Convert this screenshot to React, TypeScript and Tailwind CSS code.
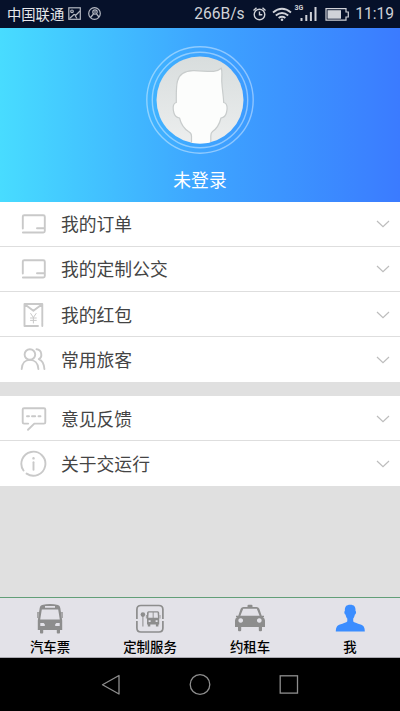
import type { ReactNode } from 'react';

interface Item {
  label: string;
  icon: ReactNode;
  low?: boolean;
}

function LineIcon({ children }: { children: ReactNode }) {
  return (
    <svg width="28" height="28" viewBox="0 0 28 28" fill="none" stroke="#c9c9c9" strokeWidth="1.9" strokeLinecap="round" strokeLinejoin="round">
      {children}
    </svg>
  );
}

const cardIcon = (
  <LineIcon>
    <path d="M2.8 18.6V6.6Q2.800 5.200 4.200 5.200H23.300q1.500 0 1.500 1.500V21q0 1.500-1.500 1.500H2.900M17 18.200h7.500" />
  </LineIcon>
);

const ACCOUNT: Item[] = [
  { label: '我的订单', icon: cardIcon },
  { label: '我的定制公交', icon: cardIcon },
  {
    label: '我的红包',
    low: true,
    icon: (
      <LineIcon>
        <path d="M22.300 21V3H4.500v22H18M22.300 21.500V25M5 3.500l8.400 6.300L21.800 3.500" />
        <path d="m10.700 12.500 2.700 4 2.700-4M13.400 16.500v5.500M10.500 17h5.800M10.500 19.400h5.800" strokeWidth="1" />
      </LineIcon>
    ),
  },
  {
    label: '常用旅客',
    icon: (
      <LineIcon>
        <circle cx="9.900" cy="8.500" r="5.300" />
        <path d="M1.700 23c.3-6 3.800-9.100 8.200-9.100s8.200 3.100 8.500 9.100M16.500 3.300c5.600.4 6.200 7.900 2.300 9.800 3.200 1.200 5.200 4.500 5.600 9.900" />
      </LineIcon>
    ),
  },
];

const ABOUT: Item[] = [
  {
    label: '意见反馈',
    low: true,
    icon: (
      <LineIcon>
        <path d="M8.200 18.600H4q-1.300 0-1.300-1.300V4.500q0-1.300 1.300-1.300h20q1.300 0 1.300 1.300v12.800q0 1.300-1.300 1.300h-9.700L8 24.800" />
        <path d="M7 11.300h2M12 11.300h3.200M18.500 11.300h2" />
      </LineIcon>
    ),
  },
  {
    label: '关于交运行',
    icon: (
      <LineIcon>
        <path d="M3.500 20.500A12 12 0 1 1 6.600 23.600" />
        <path d="M13.500 12.300v7.500" />
        <path d="M13.500 8.200v.2" strokeWidth="2.400" />
      </LineIcon>
    ),
  },
];

const TABS: Item[] = [
  {
    label: '汽车票',
    icon: (
      <svg width="32" height="32" viewBox="0 0 32 32" fill="#8d8d8d">
        <path fillRule="evenodd" d="M8 2Q16 .2 24 2q2 .6 2.300 3l1.900 12.500v9.500h-2.200v2.700q0 .8-.8.8h-1.600q-.8 0-.8-.8V27H9.200v2.700q0 .8-.8.8H6.800q-.8 0-.8-.8V27H3.800v-9.500L5.700 5q.3-2.400 2.300-3ZM11 3v1.700h10V3ZM7.800 6.500 6.200 16.500h19.600L24.200 6.500ZM6.300 20v3h4.500v-1.700L9.600 20Zm19.400 0h-3.300l-1.200 1.300V23h4.500Z" />
        <path d="M3.300 9h1.500l-.6 6h-.9ZM27.200 9h1.500v6h-.9Z" />
      </svg>
    ),
  },
  {
    label: '定制服务',
    icon: (
      <svg width="32" height="32" viewBox="0 0 32 32" fill="#8d8d8d">
        <path d="M2.900 16V6.500q0-4 4-4h18q4 0 4 4V16M2.900 18v7q0 4 4 4h18q4 0 4-4v-7" fill="none" stroke="#8d8d8d" strokeWidth="1.700" />
        <circle cx="8.900" cy="11.600" r="2.300" />
        <path d="M8.400 13h1v10.500h-1Z" />
        <path fillRule="evenodd" d="M14.500 8.300h9.300q1.200 0 1.400 1.500v11.700h-.8V23.500h-2.500v-2h-5.600v2h-2.500v-2H13V9.800q.3-1.500 1.500-1.500Zm.2 1.300-.4 5.200h4.400V9.600Zm4.900 0v5.200H24l-.4-5.200Zm-5 7.700v1.800h2v-1.800Zm7 0v1.800h2v-1.800Z" />
        <path d="M11.900 12h.8v3.500h-.8ZM25.600 12h.8v3.500h-.8Z" />
      </svg>
    ),
  },
  {
    label: '约租车',
    icon: (
      <svg width="32" height="32" viewBox="0 0 32 32" fill="#8d8d8d">
        <path fillRule="evenodd" d="M13.500 4V2.700q0-1 1-1h3q1 0 1 1V4h4q2 0 2.800 1.800l2.400 7h2.300v1.400h-1.200q2.200.8 2.200 3.200V24h-3v3.200q0 1-1 1h-1.200q-1 0-1-1V24H7.200v3.200q0 1-1 1H5q-1 0-1-1V24H1v-6.600q0-2.400 2.200-3.200H2v-1.400h2.300l2.400-7Q7.500 4 9.500 4ZM9.200 5.800 6.400 12.800h19.200l-2.800-7ZM6.700 15.200a2.300 2.300 0 1 0 .01 0ZM25.300 15.200a2.300 2.300 0 1 0 .01 0Z" />
      </svg>
    ),
  },
  {
    label: '我',
    icon: (
      <svg width="32" height="32" viewBox="0 0 32 32" fill="#3b8dff">
        <path d="M16.200 1.800c4 0 5.600 2 5.300 6.200 1 .3.700 3-.7 3.800-.3 2-1 3-1.600 3.800v2.600c.8 2 8.800 2.700 10.300 5 1 1.500 1.200 3 1.300 5.300H1.800c.1-2.300.3-3.800 1.300-5.300 1.500-2.300 9.400-3 10.200-5v-2.600c-.7-.8-1.400-1.800-1.700-3.800-1.400-.8-1.700-3.500-.7-3.800-.3-4.200 1.300-6.200 5.300-6.200Z" />
      </svg>
    ),
  },
];

function StatusBar() {
  return (
    <div className="flex h-7 justify-between bg-[#06112a] text-[#d0d2d8]">
      <div className="flex pl-[7px]">
        <span className="text-[14.3px] leading-[27px] text-[#e7e8ec]">中国联通</span>
        <svg className="ml-[4px] mt-[7px]" width="34" height="14" viewBox="0 0 34 14" fill="none" stroke="#b4b8c1" strokeWidth="1.2">
          <rect x=".8" y=".8" width="11.500" height="11.500" />
          <circle cx="4" cy="4.300" r="1.300" />
          <path d="M1.500 11.500 6 7.500l2 .5 4-4M7 8.500l2 3" />
          <circle cx="26.500" cy="6.500" r="5.800" />
          <circle cx="27" cy="5" r="2.200" />
          <path d="m22.500 10.500 3-3.500M28.500 7l2.500 3M27 4v2" />
        </svg>
      </div>
      <div className="flex font-[Roboto]">
        <span className="w-[51px] whitespace-nowrap text-[15.6px] leading-[29px]">266B/s</span>
        <svg className="ml-[6px]" width="98" height="28" viewBox="0 0 98 28" fill="none" stroke="#d0d2d8" strokeWidth="1.4">
          <circle cx="8.500" cy="14.500" r="5.300" />
          <path d="M8.500 11.500v3.300h2.800M2.500 10.500l3-2.700M14.500 10.500l-3-2.700" />
          <path d="M22 12.400q9-7.200 18 0M24.800 15.500q6.200-5 12.400 0M27.600 18q3.400-2.500 6.800 0" strokeWidth="1.900" />
          <circle cx="31" cy="19.700" r="1.300" fill="#d0d2d8" stroke="none" />
          <path d="M50.500 21v-3M55.300 21v-6M59.900 21v-9M64.500 21V7" strokeWidth="2" />
          <text x="43.500" y="10" fill="#d0d2d8" stroke="none" fontSize="7" fontWeight="700">3G</text>
          <path d="M75 8.700h20V12h2.300v5H95v3.200H75Z" strokeWidth="1.200" />
          <path d="M76.500 10.200h13.500v8.500H76.500Z" fill="#d0d2d8" stroke="none" />
        </svg>
        <span className="ml-[6px] mr-[6px] whitespace-nowrap text-[15.6px] leading-[29px]">11:19</span>
      </div>
    </div>
  );
}

function Avatar() {
  return (
    <svg width="108" height="108" viewBox="0 0 108 108">
      <defs>
        <linearGradient id="disk" x1="0" y1="0" x2="0" y2="1">
          <stop offset="0" stopColor="#d8dddd" />
          <stop offset="1" stopColor="#eceeee" />
        </linearGradient>
        <clipPath id="round">
          <circle cx="54" cy="54" r="43.500" />
        </clipPath>
      </defs>
      <circle cx="54" cy="54" r="53.200" fill="none" stroke="#fff" strokeOpacity=".42" strokeWidth="1.4" />
      <circle cx="54" cy="54" r="47.700" fill="none" stroke="#fff" strokeOpacity=".42" strokeWidth="1.4" />
      <circle cx="54" cy="54" r="43.500" fill="url(#disk)" />
      <path
        clipPath="url(#round)"
        d="M45.500 100V90C45.500 87 44.500 86.500 42.500 85.500C37 82 35 78 33.500 72C30 71.500 28.500 69.500 27.800 66.500C27 63 26.300 57.500 30.300 56.500C30.300 50 30 40 31.500 35C33.500 27 40 25 47 24.700C54 24.500 61 25.700 67.500 25.300C71 25 73.500 24 75.300 22.300C76.500 26 75.500 31 75.800 36C76.200 44 77.500 50 77.700 56.500C81.800 57.500 81.300 63 80.500 66.500C79.800 69.500 78.500 71.500 75 72C73.500 78 71 82.500 66.500 85.500C65 86.500 64.800 88 64.800 90V100Z"
        fill="#fcfdfc"
        stroke="#c8cccc"
        strokeWidth="1.2"
      />
    </svg>
  );
}

function Menu({ items }: { items: Item[] }) {
  return (
    <div className="bg-white">
      {items.map((item, i) => (
        <div key={item.label} className={`flex h-[45px] items-center pl-5 pr-[10px] ${item.low ? 'pt-[2px]' : ''} ${i < items.length - 1 ? 'border-b border-[#dedede]' : ''}`}>
          {item.icon}
          <span className="ml-[13px] flex-1 text-[17.8px] leading-none text-[#444]">{item.label}</span>
          <svg width="14" height="10" viewBox="0 0 14 10" fill="none" stroke="#bdbdbd" strokeWidth="1.2">
            <path d="m1 2 6 5.700L13 2" />
          </svg>
        </div>
      ))}
    </div>
  );
}

export default function App() {
  return (
    <div className="flex h-[711px] w-[400px] flex-col overflow-hidden bg-[#e0e0e0] font-['Noto_Sans_CJK_SC',sans-serif]">
      <StatusBar />
      <div className="flex h-[174px] flex-col items-center bg-linear-to-r from-[#48dcff] via-[#3ea5ff] to-[#3b7bff] pt-[18px]">
        <Avatar />
        <p className="mt-[15px] text-[17.8px] leading-[20px] text-white">未登录</p>
      </div>
      <Menu items={ACCOUNT} />
      <div className="h-[14px]" />
      <Menu items={ABOUT} />
      <div className="flex-1" />
      <div className="grid h-[61px] grid-cols-4 border-b border-t border-b-[#aaa9b0] border-t-[#629f77] bg-[#e3e2e8]">
        {TABS.map((tab) => (
          <div key={tab.label} className="flex flex-col items-center pt-[5px]">
            {tab.icon}
            <span className="mt-[3px] text-[13.4px] font-medium leading-[16px] text-black">{tab.label}</span>
          </div>
        ))}
      </div>
      <div className="flex h-[53px] items-center justify-center bg-black">
        <svg width="240" height="53" viewBox="0 0 240 53" fill="none" stroke="#8e8e8e" strokeWidth="1.3">
          <path d="M39 17.500v18.500L22.500 26.700Z" strokeLinejoin="round" />
          <circle cx="120" cy="26.500" r="9.800" />
          <rect x="200.200" y="17.800" width="17.300" height="17.300" />
        </svg>
      </div>
    </div>
  );
}
